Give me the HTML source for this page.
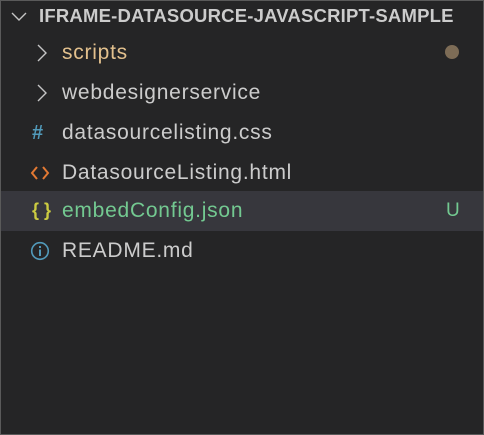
<!DOCTYPE html>
<html><head><style>
html,body{margin:0;padding:0;background:#252526;}
body{width:482px;height:433px;border:1px solid #5a5a5a;position:relative;overflow:hidden;font-family:"Segoe UI","Liberation Sans",sans-serif;}
.row{position:absolute;left:0;width:482px;height:40px;line-height:40px;font-size:21px;letter-spacing:0.75px;color:#cccccc;}
.row span.t{position:absolute;left:61px;}
.ic{position:absolute;}
.hdr{position:absolute;top:0;left:0;height:30px;line-height:30px;font-size:18.5px;letter-spacing:0.2px;font-weight:bold;color:#cccccc;}
</style></head><body>
<svg class="ic" style="left:9px;top:7px" width="18" height="18" viewBox="0 0 18 18"><path d="M2 5 L9 12 L16 5" stroke="#c5c5c5" stroke-width="1.4" fill="none"/></svg>
<div class="hdr" style="left:38px">IFRAME-DATASOURCE-JAVASCRIPT-SAMPLE</div>

<div class="row" style="top:32px"><svg class="ic" style="left:34px;top:10px" width="14" height="20" viewBox="0 0 14 20"><path d="M3 2 L11 10 L3 18" stroke="#c5c5c5" stroke-width="1.4" fill="none"/></svg><span class="t" style="color:#e2c08d">scripts</span>
<div class="ic" style="left:444px;top:12px;width:14px;height:14px;border-radius:50%;background:#7d6c56"></div></div>

<div class="row" style="top:72px"><svg class="ic" style="left:34px;top:10px" width="14" height="20" viewBox="0 0 14 20"><path d="M3 2 L11 10 L3 18" stroke="#c5c5c5" stroke-width="1.4" fill="none"/></svg><span class="t">webdesignerservice</span></div>

<div class="row" style="top:112px"><span class="ic" style="left:31px;top:0;color:#519aba;font-weight:bold;font-size:20px">#</span><span class="t">datasourcelisting.css</span></div>

<div class="row" style="top:152px"><svg class="ic" style="left:29px;top:12px" width="20" height="16" viewBox="0 0 20 16"><path d="M7 2 L2 8 L7 14 M13 2 L18 8 L13 14" stroke="#e37933" stroke-width="2" fill="none"/></svg><span class="t">DatasourceListing.html</span></div>

<div class="row" style="top:190px;background:#37373d"><span class="ic" style="left:31px;top:-1px;color:#cbcb41;font-size:18px;font-weight:bold;letter-spacing:0">{ }</span><span class="t" style="color:#73c991">embedConfig.json</span><span class="ic" style="left:445px;color:#73c991;font-size:19px">U</span></div>

<div class="row" style="top:230px"><svg class="ic" style="left:29px;top:10px" width="20" height="20" viewBox="0 0 20 20"><circle cx="10" cy="10" r="8.3" stroke="#519aba" stroke-width="1.6" fill="none"/><rect x="9" y="8.5" width="2" height="6.5" fill="#519aba"/><rect x="9" y="5" width="2" height="2" fill="#519aba"/></svg><span class="t">README.md</span></div>
</body></html>
